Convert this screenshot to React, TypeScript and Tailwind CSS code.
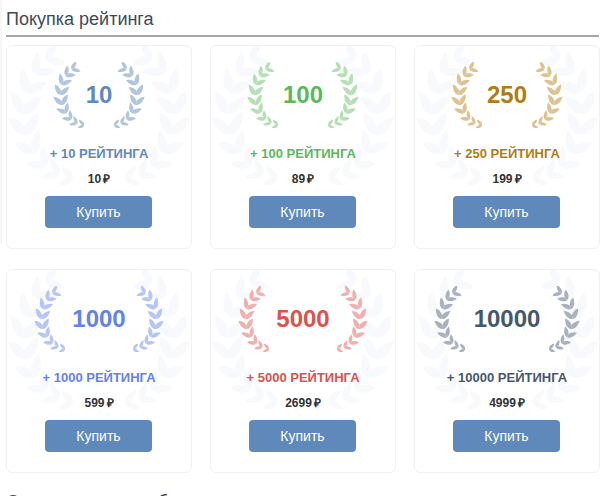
const nodes = [
  { a: 100, s: 0.66 },
  { a: 117, s: 0.72 },
  { a: 134, s: 0.82 },
  { a: 152, s: 0.95 },
  { a: 171, s: 1.05 },
  { a: 190, s: 1.05 },
  { a: 209, s: 1 },
  { a: 228, s: 0.9 },
  { a: 246, s: 0.82 },
];

const Laurel = ({ color, flip, className }: { color: string; flip?: boolean; className: string }) => (
  <svg viewBox="0 0 31 66" fill={color} className={className}>
    <g transform={flip ? "translate(31 0) scale(-1 1)" : undefined}>
      {nodes.map((n) => {
        const rad = (n.a * Math.PI) / 180;
        const x = 32 + 24 * Math.cos(rad);
        const y = 33 + 30 * Math.sin(rad);
        return (
          <g key={n.a} transform={`translate(${x.toFixed(2)} ${y.toFixed(2)}) rotate(${n.a + 90}) scale(${n.s})`}>
            <path d="M-5 0 C-5 -3.2 -2 -6 4 -7 C3.8 -3.8 1 -1.2 -1.2 0Z" />
            <path d="M-5 0 C-5 3.2 -2 6 4 7 C3.8 3.8 1 1.2 -1.2 0Z" />
          </g>
        );
      })}
    </g>
  </svg>
);

const packs = [
  { n: "10", price: "10", text: "text-[#5f89ba]", leaf: "#b1c5dd", gap: "gap-[2px]" },
  { n: "100", price: "89", text: "text-[#5cb85c]", leaf: "#b5dfb5", gap: "gap-[5px]" },
  { n: "250", price: "199", text: "text-[#b07d12]", leaf: "#dcc391", gap: "gap-[5px]" },
  { n: "1000", price: "599", text: "text-[#6581ea]", leaf: "#b6c5f6", gap: "gap-[7px]" },
  { n: "5000", price: "2699", text: "text-[#d9534f]", leaf: "#efb0ae", gap: "gap-[7px]" },
  { n: "10000", price: "4999", text: "text-[#46586e]", leaf: "#a8b1bd", gap: "gap-[9px]" },
];

const PackCard = ({ n, price, text, leaf, gap }: (typeof packs)[number]) => (
  <div className="relative flex h-[204px] flex-col items-center overflow-hidden rounded-md border border-[#f0f0f0] bg-white">
    <Laurel color="#f7f9fc" className="absolute left-0 top-[-3px] h-[142px] w-[66px]" />
    <Laurel color="#f7f9fc" flip className="absolute right-0 top-[-3px] h-[142px] w-[66px]" />
    <div className={`relative mt-[16px] flex h-[66px] items-center ${gap}`}>
      <Laurel color={leaf} className="h-[66px] w-[31px]" />
      <span className={`text-2xl font-bold ${text}`}>{n}</span>
      <Laurel color={leaf} flip className="h-[66px] w-[31px]" />
    </div>
    <div className={`relative mt-[16px] text-[13px] leading-5 font-bold ${text}`}>+ {n} РЕЙТИНГА</div>
    <div className="relative mt-[5px] text-xs leading-5 font-bold text-[#333333]">
      {price}
      <span className="ml-[2px]">₽</span>
    </div>
    <button className="relative mt-[7px] mr-[1px] h-8 w-[107px] rounded-sm bg-[#5f89ba] text-sm text-white">Купить</button>
  </div>
);

export default function App() {
  return (
    <div className="relative h-[496px] w-[605px] overflow-hidden bg-white px-[6px] font-['Liberation_Sans',Arial,sans-serif]">
      <div className="absolute left-0 top-0 h-[243px] w-[2px] bg-[#f7f7f7]" />
      <h2 className="h-[37px] border-b-2 border-[#a6a6a6] pt-[8px] text-lg leading-[22px] text-[#3d4a5c]">Покупка рейтинга</h2>
      <div className="mt-[8px] grid w-[594px] grid-cols-3 gap-x-[18px] gap-y-[20px]">
        {packs.map((p) => (
          <PackCard key={p.n} {...p} />
        ))}
      </div>
      <h2 className="mt-[18px] text-lg leading-[22px] text-[#3d4a5c]">Оплата и возврат б</h2>
    </div>
  );
}
